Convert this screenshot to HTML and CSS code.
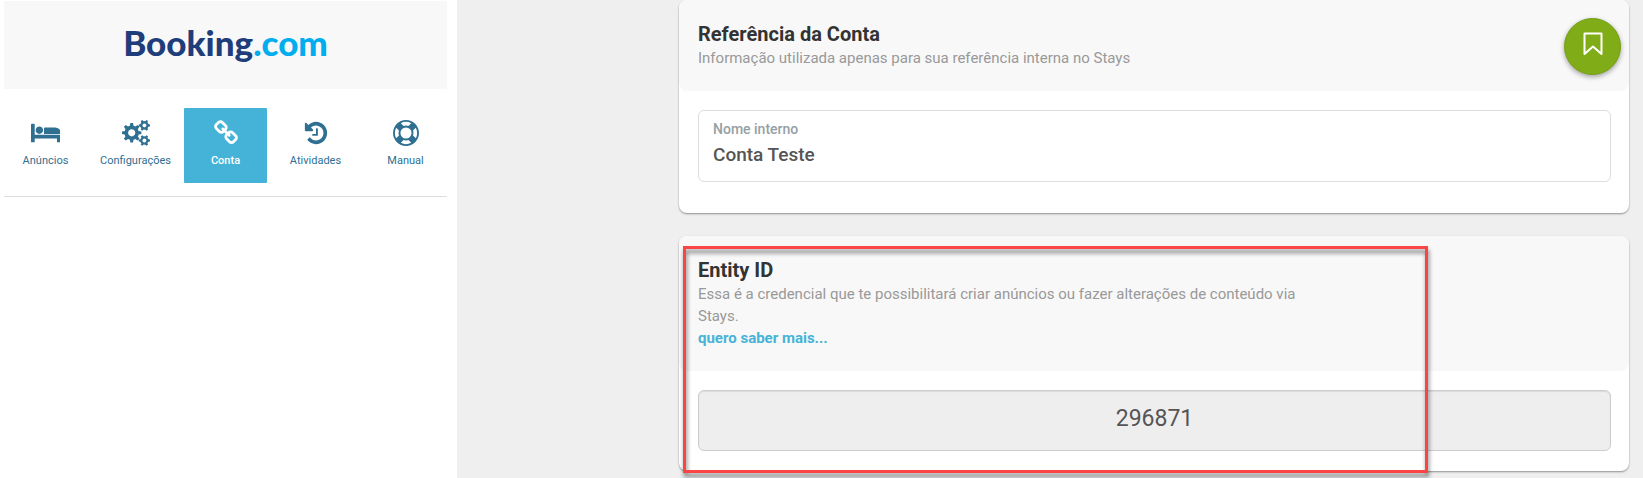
FILE: index.html
```html
<!DOCTYPE html>
<html lang="pt-BR">
<head>
<meta charset="utf-8">
<meta name="viewport" content="width=device-width, initial-scale=1">
<title>Conta</title>
<link rel="stylesheet" href="styles.css">
</head>
<body>
<div class="layout">
  <aside class="sidebar">
    <div class="brand"><span class="brand-name">Booking</span><span class="brand-tld">.com</span></div>
    <nav class="tabs">
      <a class="tab" href="#anuncios">
        <svg class="icon" viewBox="0 0 2048 1792" aria-hidden="true"><path d="M256 1024h1728q26 0 45 19t19 45v448h-256v-256h-1536v256h-256v-1216q0-26 19-45t45-19h128q26 0 45 19t19 45v704zm576-320q0-106-75-181t-181-75-181 75-75 181 75 181 181 75 181-75 75-181zm1216 256v-64q0-159-112.5-271.5t-271.5-112.5h-704q-26 0-45 19t-19 45v384h1152z"/></svg>
        Anúncios
      </a>
      <a class="tab" href="#configuracoes">
        <svg class="icon" viewBox="0 0 28 26" aria-hidden="true">
          <defs>
            <g id="gear">
              <circle r="5.4" fill="none" stroke="currentColor" stroke-width="3.6"/>
              <path id="teeth" d="M-1.9-6.5L-1.3-9.7H1.3L1.9-6.5ZM-1.9 6.5L-1.3 9.7H1.3L1.9 6.5ZM-6.5-1.9L-9.7-1.3V1.3L-6.5 1.9ZM6.5-1.9L9.7-1.3V1.3L6.5 1.9Z"/>
              <use href="#teeth" transform="rotate(45)"/>
            </g>
            <g id="small-gear">
              <circle r="3" fill="none" stroke="currentColor" stroke-width="2.2"/>
              <path id="pair" d="M-1.3-3.5L-1-5.6H1L1.3-3.5ZM-1.3 3.5L-1 5.6H1L1.3 3.5Z"/>
              <use href="#pair" transform="rotate(60)"/>
              <use href="#pair" transform="rotate(120)"/>
            </g>
          </defs>
          <use href="#gear" x="9.7" y="12.8"/>
          <use href="#small-gear" transform="translate(22.4 5.4) rotate(30)"/>
          <use href="#small-gear" transform="translate(22.4 20.5) rotate(30)"/>
        </svg>
        Configurações
      </a>
      <a class="tab tab-active" href="#conta" aria-current="page">
        <svg class="icon" viewBox="0 0 1792 1792" aria-hidden="true"><path d="M1520 1216q0-40-28-68l-208-208q-28-28-68-28-42 0-72 32 3 3 19 18.500t21.500 21.500 15 19 13 25.500 3.500 27.500q0 40-28 68t-68 28q-15 0-27.500-3.500t-25.500-13-19-15-21.500-21.500-18.500-19q-33 31-33 73 0 40 28 68l206 207q27 27 68 27 40 0 68-26l147-146q28-28 28-67zm-703-705q0-40-28-68l-206-207q-28-28-68-28-39 0-68 27l-147 146q-28 28-28 67 0 40 28 68l208 208q27 27 68 27 42 0 72-31-3-3-19-18.500t-21.500-21.500-15-19-13-25.500-3.500-27.500q0-40 28-68t68-28q15 0 27.500 3.500t25.500 13 19 15 21.500 21.500 18.500 19q33-31 33-73zm895 705q0 120-85 203l-147 146q-83 83-203 83-121 0-204-85l-206-207q-83-83-83-203 0-123 88-209l-88-88q-86 88-208 88-120 0-204-84l-208-208q-84-84-84-204t85-203l147-146q83-83 203-83 121 0 204 85l206 207q83 83 83 203 0 123-88 209l88 88q86-88 208-88 120 0 204 84l208 208q84 84 84 204z"/></svg>
        Conta
      </a>
      <a class="tab" href="#atividades">
        <svg class="icon" viewBox="0 0 1792 1792" aria-hidden="true"><path d="M1664 896q0 156-61 298t-164 245-245 164-298 61q-172 0-327-72.500t-264-204.500q-7-10-6.500-22.500t8.500-20.500l137-138q10-9 25-9 16 2 23 12 73 95 179 147t225 52q104 0 198.500-40.500t163.500-109.500 109.500-163.500 40.500-198.500-40.500-198.500-109.500-163.500-163.500-109.500-198.500-40.500q-98 0-188 35.500t-160 101.500l137 138q31 30 14 69-17 40-59 40h-448q-26 0-45-19t-19-45v-448q0-42 40-59 39-17 69 14l130 129q107-101 244.500-156.500t284.500-55.500q156 0 298 61t245 164 164 245 61 298zm-640-288v448q0 14-9 23t-23 9h-320q-14 0-23-9t-9-23v-64q0-14 9-23t23-9h224v-352q0-14 9-23t23-9h64q14 0 23 9t9 23z"/></svg>
        Atividades
      </a>
      <a class="tab" href="#manual">
        <svg class="icon" viewBox="0 0 1792 1792" aria-hidden="true"><path d="M896 0q182 0 348 71t286 191 191 286 71 348-71 348-191 286-286 191-348 71-348-71-286-191-191-286-71-348 71-348 191-286 286-191 348-71zm0 128q-190 0-361 90l194 194q82-28 167-28t167 28l194-194q-171-90-361-90zm-678 1129l194-194q-28-82-28-167t28-167l-194-194q-90 171-90 361t90 361zm678 407q190 0 361-90l-194-194q-82 28-167 28t-167-28l-194 194q171 90 361 90zm0-384q159 0 271.500-112.500t112.500-271.500-112.500-271.500-271.500-112.500-271.500 112.500-112.500 271.500 112.500 271.500 271.500 112.500zm484-217l194 194q90-171 90-361t-90-361l-194 194q28 82 28 167t-28 167z"/></svg>
        Manual
      </a>
    </nav>
  </aside>
  <main class="content">
    <section class="card">
      <header class="card-head">
        <h2 class="title">Referência da Conta</h2>
        <p class="subtitle">Informação utilizada apenas para sua referência interna no Stays</p>
      </header>
      <div class="card-body card-body-tall">
        <div class="field">
          <label class="field-label" for="nome">Nome interno</label>
          <input class="field-input" id="nome" type="text" value="Conta Teste">
        </div>
      </div>
      <button class="save" type="button" aria-label="Salvar">
        <svg class="save-icon" viewBox="0 0 20 24" aria-hidden="true"><path d="M1.500 1.500h17v20.500L10 14.500 1.500 22z"/></svg>
      </button>
    </section>
    <section class="card">
      <header class="card-head">
        <h2 class="title" id="entity">Entity ID</h2>
        <p class="subtitle">Essa é a credencial que te possibilitará criar anúncios ou fazer alterações de conteúdo via Stays.</p>
        <a class="more" href="#mais">quero saber mais...</a>
      </header>
      <div class="card-body">
        <input class="entity-input" type="text" value="296871" readonly aria-labelledby="entity">
      </div>
      <div class="highlight"></div>
    </section>
  </main>
</div>
</body>
</html>
```

FILE: styles.css
```css
* {
  box-sizing: border-box;
}

body {
  margin: 0;
  background: #efefef;
  font-family: Roboto, "Liberation Sans", sans-serif;
  color: #333;
}

.layout {
  display: grid;
  grid-template-columns: 457px 1fr;
  min-height: 100vh;
  overflow: hidden;
}

.sidebar {
  padding: 1px 10px 0 4px;
  background: #fff;
}

.brand {
  display: flex;
  justify-content: center;
  padding: 19px 0 25px;
  background: #f8f8f8;
  font-family: Lato, sans-serif;
  font-size: 35px;
  font-weight: 900;
  line-height: 44px;
}

.brand-name {
  color: #1f3d7a;
}

.brand-tld {
  color: #00adef;
}

.tabs {
  display: grid;
  grid-template-columns: repeat(5, 1fr);
  gap: 7px;
  padding: 19px 0 13px;
  border-bottom: 1px solid #ddd;
}

.tab {
  display: flex;
  flex-direction: column;
  align-items: center;
  gap: 7px;
  padding: 12px 0 15px;
  border-radius: 1px;
  color: #2f6f92;
  font-size: 11px;
  line-height: 15px;
  text-decoration: none;
}

.tab-active {
  background: #45b3d7;
  color: #fff;
  font-weight: 500;
}

.icon {
  height: 26px;
  fill: currentColor;
}

.content {
  display: flex;
  flex-direction: column;
  gap: 23px;
  padding: 0 14px 0 222px;
}

.card {
  position: relative;
  border-radius: 8px;
  background: #fff;
  box-shadow: 0 1px 2px rgba(0, 0, 0, 0.4);
}

.card-head {
  padding: 22px 19px;
  border-radius: 8px;
  background: #f8f8f8;
  font-size: 15px;
  line-height: 22px;
}

.title {
  margin: 0;
  font-size: 20px;
  font-weight: 700;
  line-height: 25px;
}

.subtitle {
  max-width: 620px;
  margin: 0;
  color: #999;
}

.more {
  color: #45b3d7;
  font-weight: 700;
  text-decoration: none;
}

.card-body {
  padding: 19px 18px 20px 19px;
}

.card-body-tall {
  padding-bottom: 31px;
}

.field {
  display: flex;
  flex-direction: column;
  padding: 7px 14px 12px;
  border: 1px solid #ddd;
  border-radius: 6px;
}

.field-label {
  color: #95a0a3;
  font-size: 14px;
  font-weight: 500;
  line-height: 22px;
}

.field-input {
  height: 29px;
  padding: 0;
  border: 0;
  background: none;
  color: #555;
  font: 500 19px Roboto, sans-serif;
}

.entity-input {
  display: block;
  width: 100%;
  height: 61px;
  padding: 0 0 4px;
  border: 1px solid #ccc;
  border-radius: 6px;
  background: #eee;
  box-shadow: inset 0 1px 1px rgba(0, 0, 0, 0.08);
  color: #555;
  font: 23px Roboto, sans-serif;
  text-align: center;
}

.save {
  position: absolute;
  top: 18px;
  right: 8px;
  display: grid;
  place-items: center;
  width: 57px;
  height: 57px;
  padding: 0 0 6px;
  border: 1px solid #75a013;
  border-radius: 50%;
  background: #80ac17;
  box-shadow: 0 2px 5px rgba(0, 0, 0, 0.35);
}

.save-icon {
  width: 20px;
  height: 24px;
  fill: none;
  stroke: #fff;
  stroke-width: 2;
  stroke-linejoin: round;
}

.highlight {
  position: absolute;
  inset: 10px 201px -2px 4px;
  border: 3px solid #fb4444;
  filter: drop-shadow(1px 4px 2px rgba(0, 0, 0, 0.5));
  pointer-events: none;
}
```
